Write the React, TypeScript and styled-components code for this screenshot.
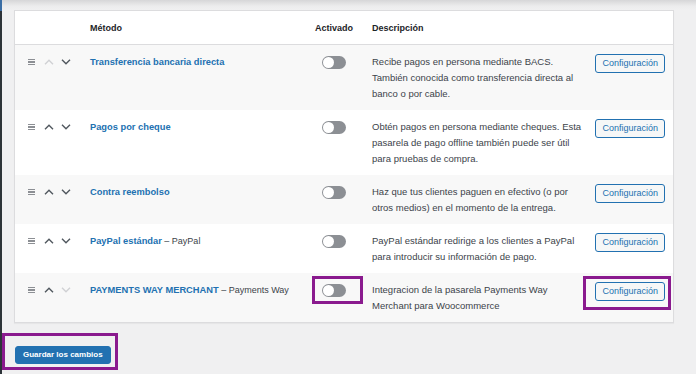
import React from 'react';
import styled, { createGlobalStyle } from 'styled-components';

type Gateway = {
  name: string;
  via?: string;
  description: string;
  canUp: boolean;
  canDown: boolean;
  marked?: boolean;
};

const gateways: Gateway[] = [
  {
    name: 'Transferencia bancaria directa',
    description:
      'Recibe pagos en persona mediante BACS. También conocida como transferencia directa al banco o por cable.',
    canUp: false,
    canDown: true,
  },
  {
    name: 'Pagos por cheque',
    description:
      'Obtén pagos en persona mediante cheques. Esta pasarela de pago offline también puede ser útil para pruebas de compra.',
    canUp: true,
    canDown: true,
  },
  {
    name: 'Contra reembolso',
    description:
      'Haz que tus clientes paguen en efectivo (o por otros medios) en el momento de la entrega.',
    canUp: true,
    canDown: true,
  },
  {
    name: 'PayPal estándar',
    via: 'PayPal',
    description:
      'PayPal estándar redirige a los clientes a PayPal para introducir su información de pago.',
    canUp: true,
    canDown: true,
  },
  {
    name: 'PAYMENTS WAY MERCHANT',
    via: 'Payments Way',
    description: 'Integracion de la pasarela Payments Way Merchant para Woocommerce',
    canUp: true,
    canDown: false,
    marked: true,
  },
];

function Chevron({ up, enabled }: { up: boolean; enabled: boolean }) {
  return (
    <svg width="10" height="6" viewBox="0 0 10 6">
      <polyline
        points={up ? '1,5.2 5,1.2 9,5.2' : '1,0.8 5,4.8 9,0.8'}
        fill="none"
        stroke={enabled ? '#50575e' : '#d0d1d4'}
        strokeWidth="1.4"
      />
    </svg>
  );
}

function App() {
  return (
    <>
      <GlobalStyle />
      <Page>
        <AdminEdge />
        <Main>
          <Table>
            <HeadRow>
              <span />
              <HeadCell>Método</HeadCell>
              <HeadCell>Activado</HeadCell>
              <HeadCell>Descripción</HeadCell>
              <span />
            </HeadRow>
            {gateways.map((g, i) => (
              <Row key={g.name} $striped={i % 2 === 0}>
                <Handles>
                  <DragIcon>
                    <i />
                    <i />
                    <i />
                  </DragIcon>
                  <Chevron up enabled={g.canUp} />
                  <Chevron up={false} enabled={g.canDown} />
                </Handles>
                <NameCell>
                  <MethodLink>{g.name}</MethodLink>
                  {g.via && <Via> – {g.via}</Via>}
                </NameCell>
                <ToggleCell>
                  <Toggle>
                    <Knob />
                  </Toggle>
                  {g.marked && <ToggleMark />}
                </ToggleCell>
                <Description>{g.description}</Description>
                <ActionCell>
                  <ConfigButton>Configuración</ConfigButton>
                  {g.marked && <ButtonMark />}
                </ActionCell>
              </Row>
            ))}
          </Table>
          <Footer>
            <SaveButton>Guardar los cambios</SaveButton>
            <SaveMark />
          </Footer>
        </Main>
      </Page>
    </>
  );
}

export default App;

const GlobalStyle = createGlobalStyle`
  html, body {
    margin: 0;
    padding: 0;
    background: #f0f0f1;
  }
  body {
    font-family: 'Liberation Sans', Arial, sans-serif;
    color: #3c434a;
  }
  * {
    box-sizing: border-box;
  }
`;

const Page = styled.div`
  display: flex;
  width: 696px;
  height: 374px;
  overflow: hidden;
`;

const AdminEdge = styled.div`
  width: 2px;
  flex-shrink: 0;
  background: linear-gradient(#3b6ea5 0 11px, #2c3338 11px);
`;

const Main = styled.div`
  flex: 1;
  padding: 10px 0 0 12px;
  background: linear-gradient(#d6d6d8 0, #ececed 6px, #f0f0f1 10px);
`;

const Table = styled.div`
  width: 660px;
  border: 1px solid #dcdcde;
  background: #fff;
  box-shadow: 0 1px 1px rgba(0, 0, 0, 0.04);
`;

const columns = '75px 225px 57px 220px 81px';

const HeadRow = styled.div`
  display: grid;
  grid-template-columns: ${columns};
  height: 34px;
  align-items: center;
  border-bottom: 1px solid #dcdcde;
`;

const HeadCell = styled.span`
  font-size: 9px;
  font-weight: 700;
  color: #1d2327;
`;

const Row = styled.div<{ $striped: boolean }>`
  display: grid;
  grid-template-columns: ${columns};
  align-items: start;
  padding: 9px 0 8px;
  background: ${(p) => (p.$striped ? '#f8f8f8' : '#fff')};
  font-size: 9.5px;
  line-height: 16px;
`;

const Handles = styled.div`
  display: flex;
  align-items: center;
  gap: 7px;
  height: 16px;
  padding-left: 13px;
`;

const DragIcon = styled.span`
  display: flex;
  flex-direction: column;
  gap: 1.5px;
  width: 7px;
  margin-right: 2px;

  i {
    display: block;
    height: 1.2px;
    background: #8c8f94;
  }
`;

const NameCell = styled.div`
  white-space: nowrap;
`;

const MethodLink = styled.a`
  color: #2271b1;
  font-size: 9.3px;
  font-weight: 700;
  text-decoration: none;
`;

const Via = styled.span`
  color: #3c434a;
  font-size: 9px;
`;

const ToggleCell = styled.div`
  position: relative;
  height: 16px;
  display: flex;
  align-items: center;
  padding-left: 7px;
`;

const Toggle = styled.span`
  position: relative;
  width: 24px;
  height: 13px;
  border-radius: 7px;
  background: #8c8f94;
`;

const Knob = styled.span`
  position: absolute;
  left: 1px;
  top: 1px;
  width: 11px;
  height: 11px;
  border-radius: 50%;
  background: #fff;
`;

const Mark = styled.span`
  position: absolute;
  border: 3px solid #8a1a8e;
  pointer-events: none;
`;

const ToggleMark = styled(Mark)`
  left: -3px;
  top: -6px;
  width: 51px;
  height: 28px;
`;

const Description = styled.p`
  margin: 0;
  padding-right: 8px;
  color: #3c434a;
`;

const ActionCell = styled.div`
  position: relative;
  display: flex;
  justify-content: flex-end;
  padding-right: 8px;
`;

const ConfigButton = styled.button`
  height: 19px;
  padding: 0 6px;
  border: 1px solid #2271b1;
  border-radius: 3px;
  background: #f6f7f7;
  color: #2271b1;
  font-family: inherit;
  font-size: 9px;
  line-height: 17px;
`;

const ButtonMark = styled(Mark)`
  right: 2px;
  top: -6px;
  width: 88px;
  height: 34px;
`;

const Footer = styled.div`
  position: relative;
  padding: 20px 0 0 1px;
`;

const SaveButton = styled.button`
  height: 18px;
  padding: 0 7px;
  border: 1px solid #2271b1;
  border-radius: 3px;
  background: #2271b1;
  color: #fff;
  font-family: inherit;
  font-size: 8px;
  font-weight: 700;
`;

const SaveMark = styled(Mark)`
  left: -12px;
  top: 10px;
  width: 116px;
  height: 37px;
`;
